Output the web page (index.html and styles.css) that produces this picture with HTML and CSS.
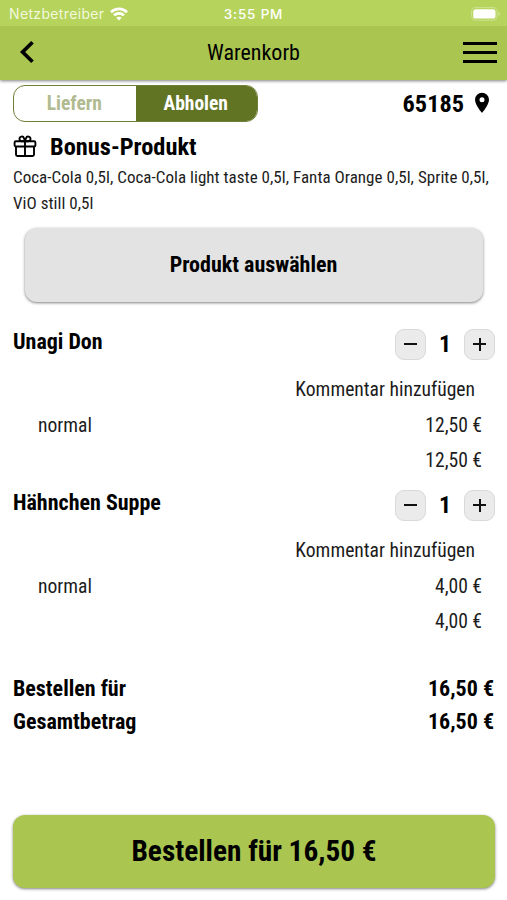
FILE: index.html
```html
<!DOCTYPE html>
<html lang="de">
<head>
  <meta charset="UTF-8">
  <meta name="viewport" content="width=device-width, initial-scale=1.0">
  <title>Warenkorb</title>
  <link rel="stylesheet" href="styles.css">
</head>
<body>

  <header>
    <div class="status-bar">
      <div class="carrier">
        <span>Netzbetreiber</span>
        <svg width="18" height="14" viewBox="0 0 18 14" fill="none" stroke="#fff" stroke-width="2.6">
          <path d="M1 5.2C5.5 0.8 12.5 0.8 17 5.2" />
          <path d="M4 8.4C6.8 5.7 11.2 5.7 14 8.4" />
          <path d="M6.3 10.8C7.8 9.3 10.2 9.3 11.7 10.8L9 13.6z" fill="#fff" stroke="none" />
        </svg>
      </div>
      <div class="clock">3:55 PM</div>
      <div class="battery">
        <svg width="30" height="14" viewBox="0 0 30 14">
          <rect x="0.6" y="0.6" width="25.5" height="12.6" rx="4" fill="none" stroke="#cfe393" stroke-width="1" />
          <rect x="2.2" y="2.2" width="22.3" height="9.4" rx="2.6" fill="#fff" />
          <path d="M27.6 4.8v4.2c1.6-.6 1.6-3.6 0-4.2z" fill="#d9eaa6" />
        </svg>
      </div>
    </div>
    <div class="nav-bar">
      <svg class="back" width="16" height="24" viewBox="0 0 16 24" fill="none" stroke="#000" stroke-width="3.7">
        <path d="M13.5 2.3L3.6 12l9.9 9.7" />
      </svg>
      <h1>Warenkorb</h1>
      <div class="menu"><i></i><i></i><i></i></div>
    </div>
  </header>

  <main>
    <div class="delivery">
      <div class="toggle">
        <div>Liefern</div>
        <div class="active">Abholen</div>
      </div>
      <div class="zip">
        <span>65185</span>
        <svg width="16" height="22" viewBox="0 0 16 22">
          <path fill-rule="evenodd" d="M8 0.8A7 7 0 0 0 1 7.8C1 13 8 21 8 21s7-8 7-13.2A7 7 0 0 0 8 .8zM8 5.3a2.5 2.5 0 1 1 0 5 2.5 2.5 0 0 1 0-5z" />
        </svg>
      </div>
    </div>

    <div class="bonus">
      <h2>
        <svg width="24" height="23" viewBox="0 0 24 23" fill="none" stroke="#000" stroke-width="1.9">
          <rect x="1.6" y="6.2" width="20.8" height="5.3" rx="1.3" />
          <path d="M3 11.5V19.5a1.5 1.5 0 0 0 1.5 1.5h15a1.5 1.5 0 0 0 1.5-1.5V11.5" />
          <path d="M12 6.2V21M12 6.2H8.8A2.3 2.3 0 1 1 11 3.2L12 6.2zM12 6.2h3.2A2.3 2.3 0 1 0 13 3.2L12 6.2z" />
        </svg>
        <span>Bonus-Produkt</span>
      </h2>
      <p>Coca-Cola 0,5l, Coca-Cola light taste 0,5l, Fanta Orange 0,5l, Sprite 0,5l, ViO still 0,5l</p>
      <button class="choose">Produkt auswählen</button>
    </div>

    <div class="item">
      <div class="item-head">
        <h3>Unagi Don</h3>
        <div class="quantity">
          <button class="minus"></button>
          <b>1</b>
          <button class="plus"></button>
        </div>
      </div>
      <div class="row comment">Kommentar hinzufügen</div>
      <div class="row"><span>normal</span><span>12,50 €</span></div>
      <div class="row sum">12,50 €</div>
    </div>

    <div class="item">
      <div class="item-head">
        <h3>Hähnchen Suppe</h3>
        <div class="quantity">
          <button class="minus"></button>
          <b>1</b>
          <button class="plus"></button>
        </div>
      </div>
      <div class="row comment">Kommentar hinzufügen</div>
      <div class="row"><span>normal</span><span>4,00 €</span></div>
      <div class="row sum">4,00 €</div>
    </div>

    <div class="totals">
      <div><span>Bestellen für</span><span>16,50 €</span></div>
      <div><span>Gesamtbetrag</span><span>16,50 €</span></div>
    </div>
  </main>

  <footer>
    <button class="order">Bestellen für 16,50 €</button>
  </footer>

</body>
</html>
```
FILE: styles.css
```css
* {
  box-sizing: border-box;
}

body {
  margin: 0;
  height: 900px;
  display: flex;
  flex-direction: column;
  overflow: hidden;
  background-color: #fff;
  color: #000;
  font-family: "Roboto Condensed", Roboto, sans-serif;
  font-stretch: 75%;
}

h1, h2, h3, p {
  margin: 0;
}

button {
  border: none;
  padding: 0;
  color: #000;
  font: inherit;
  font-weight: bold;
}

svg {
  display: block;
  flex: none;
}

header {
  background-color: #abc650;
  box-shadow: 0 1px 3px rgba(0, 0, 0, 0.5);
}

/* status bar */
.status-bar {
  display: grid;
  grid-template-columns: 1fr auto 1fr;
  align-items: center;
  height: 26px;
  padding: 1px 6px 0 9px;
  background-color: #b6d35c;
  color: #fff;
  font-family: Inter, sans-serif;
  font-stretch: 100%;
  font-size: 13.5px;
}

.carrier {
  display: flex;
  align-items: center;
  gap: 6px;
  color: #f2f8dc;
  font-size: 14px;
  letter-spacing: 0.35px;
}

.clock {
  margin-right: 3px;
  font-weight: 500;
  letter-spacing: 0.8px;
}

.battery {
  justify-self: end;
}

/* nav bar */
.nav-bar {
  display: grid;
  grid-template-columns: 1fr auto 1fr;
  align-items: center;
  height: 54px;
  padding: 0 10px 2px 19px;
}

h1 {
  margin-right: 9px;
  font-size: 22px;
  font-weight: normal;
}

.menu {
  justify-self: end;
  display: flex;
  flex-direction: column;
  gap: 6px;
  width: 34px;
}

.menu i {
  height: 3px;
  background-color: #000;
}

main {
  flex: 1;
  padding: 5px 13px 0;
}

.delivery {
  display: flex;
  justify-content: space-between;
  align-items: center;
}

.toggle {
  display: flex;
  width: 245px;
  height: 37px;
  border: 1px solid #6f8038;
  border-radius: 12px;
  overflow: hidden;
  font-size: 19.5px;
  font-weight: bold;
  line-height: 35px;
  text-align: center;
}

.toggle div {
  flex: 1;
  padding-right: 1px;
  color: #b1bb91;
}

.toggle .active {
  background-color: #617424;
  color: #fff;
}

.zip {
  display: flex;
  align-items: center;
  gap: 10px;
  padding-right: 4px;
  font-size: 24.3px;
  font-weight: bold;
}

.zip svg {
  margin-bottom: 2px;
}

/* bonus */
.bonus h2 {
  display: flex;
  align-items: center;
  gap: 13px;
  height: 30px;
  margin-top: 9px;
  font-size: 24.4px;
}

.bonus p {
  margin-top: 4px;
  color: #1c1c1c;
  font-size: 17px;
  letter-spacing: 0.03px;
  line-height: 25.5px;
}

.choose {
  display: block;
  width: 458px;
  height: 74px;
  margin: 12px auto 0;
  padding-bottom: 1px;
  background-color: #e3e3e3;
  border-radius: 12px;
  box-shadow: 0 1px 3px rgba(0, 0, 0, 0.5);
  font-size: 22px;
}

/* cart items */
.item {
  height: 161px;
}

.bonus + .item {
  margin-top: 24px;
}

.item-head {
  display: flex;
  justify-content: space-between;
  height: 36px;
  margin-bottom: 10px;
}

h3 {
  font-size: 22px;
  line-height: 32px;
}

.quantity {
  display: flex;
  align-items: center;
  margin-right: -1px;
}

.quantity b {
  width: 38px;
  font-size: 24px;
  text-align: center;
}

.quantity button {
  display: grid;
  place-items: center;
  width: 31px;
  height: 31px;
  background-color: #ebebeb;
  border: 1px solid #d9d9d9;
  border-radius: 9px;
}

.minus::before, .plus::before, .plus::after {
  content: "";
  grid-area: 1 / 1;
  width: 13px;
  height: 2px;
  background-color: #111;
}

.plus::after {
  width: 2px;
  height: 13px;
}

.row {
  display: flex;
  justify-content: space-between;
  height: 35.5px;
  padding: 0 12px 0 25px;
  color: #1c1c1c;
  font-size: 19.6px;
  line-height: 35.5px;
}

.row.comment {
  justify-content: flex-end;
  padding-right: 19px;
}

.row.sum {
  justify-content: flex-end;
}

/* totals */
.totals {
  margin-top: 24px;
  font-size: 22px;
  font-weight: bold;
  line-height: 33px;
}

.totals div {
  display: flex;
  justify-content: space-between;
}

footer {
  padding: 0 12px 12px 13px;
}

.order {
  width: 100%;
  height: 73px;
  display: block;
  padding-bottom: 2px;
  background-color: #abc650;
  border-radius: 12px;
  box-shadow: 0 1px 3px rgba(0, 0, 0, 0.5);
  font-size: 29.3px;
}
```
